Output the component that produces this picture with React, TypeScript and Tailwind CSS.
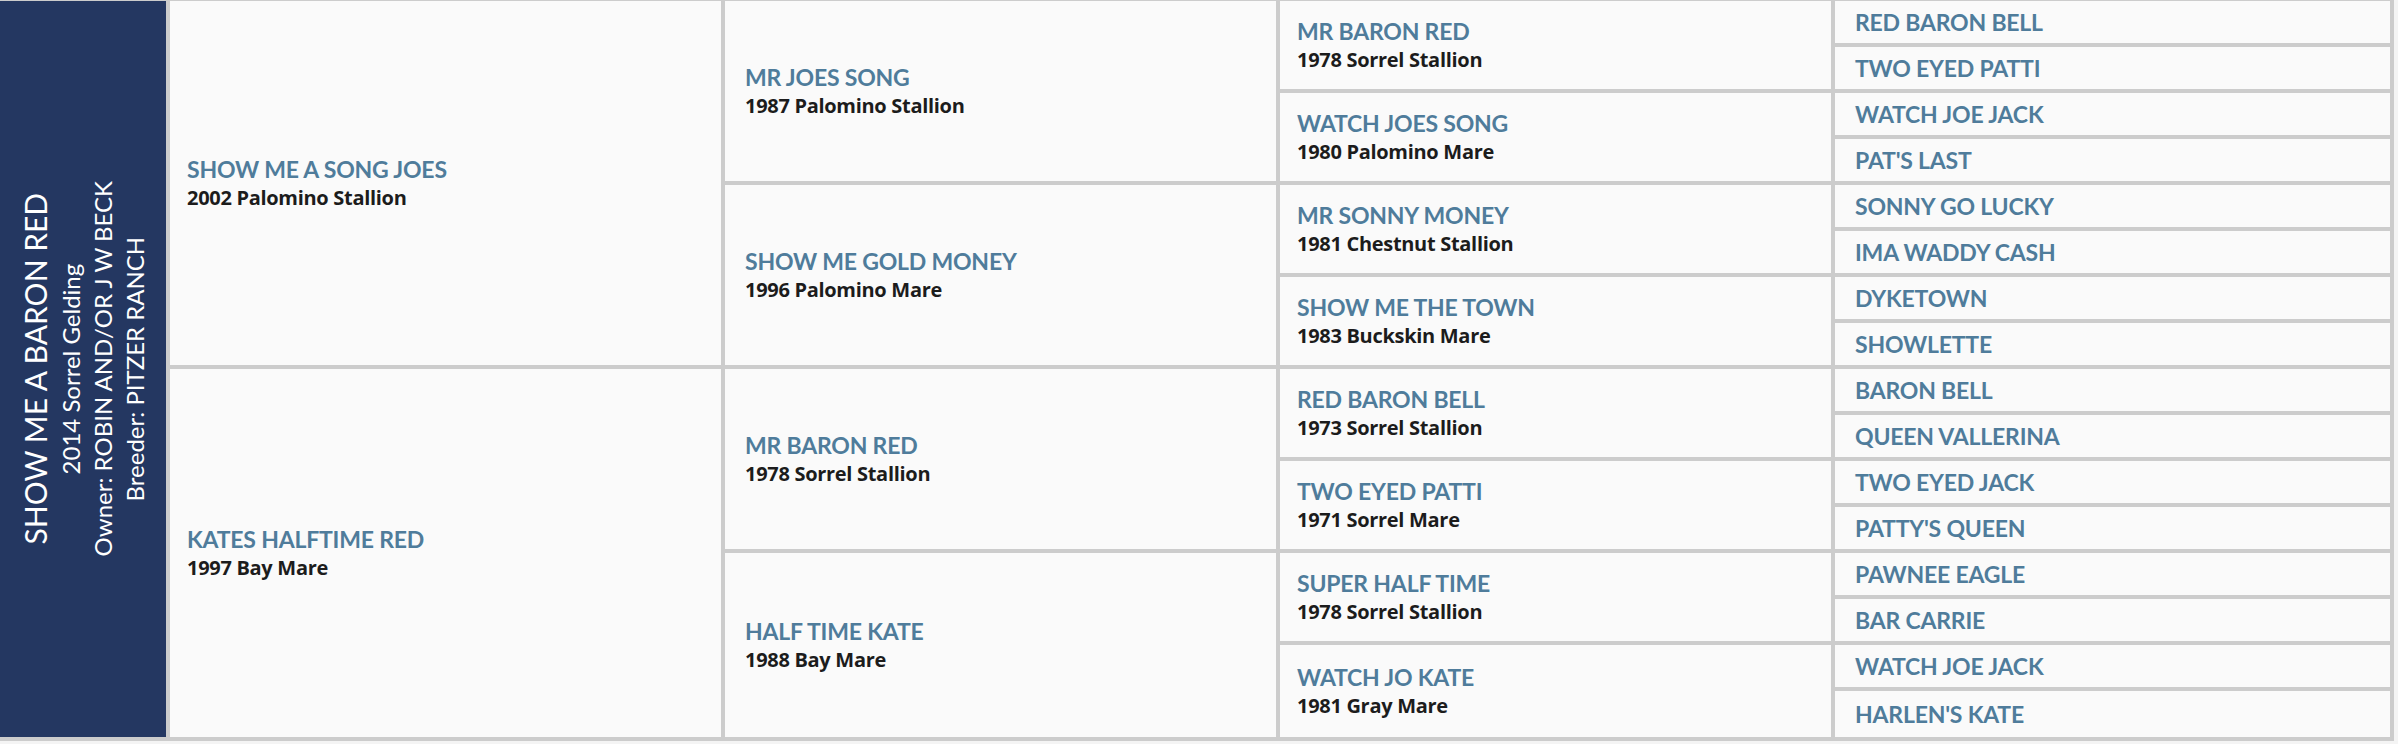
type Horse = { name: string; info?: string };

const sires: Horse[] = [
  { name: "SHOW ME A SONG JOES", info: "2002 Palomino Stallion" },
  { name: "KATES HALFTIME RED", info: "1997 Bay Mare" },
];

const grand: Horse[] = [
  { name: "MR JOES SONG", info: "1987 Palomino Stallion" },
  { name: "SHOW ME GOLD MONEY", info: "1996 Palomino Mare" },
  { name: "MR BARON RED", info: "1978 Sorrel Stallion" },
  { name: "HALF TIME KATE", info: "1988 Bay Mare" },
];

const great: Horse[] = [
  { name: "MR BARON RED", info: "1978 Sorrel Stallion" },
  { name: "WATCH JOES SONG", info: "1980 Palomino Mare" },
  { name: "MR SONNY MONEY", info: "1981 Chestnut Stallion" },
  { name: "SHOW ME THE TOWN", info: "1983 Buckskin Mare" },
  { name: "RED BARON BELL", info: "1973 Sorrel Stallion" },
  { name: "TWO EYED PATTI", info: "1971 Sorrel Mare" },
  { name: "SUPER HALF TIME", info: "1978 Sorrel Stallion" },
  { name: "WATCH JO KATE", info: "1981 Gray Mare" },
];

const greatGreat: string[] = [
  "RED BARON BELL",
  "TWO EYED PATTI",
  "WATCH JOE JACK",
  "PAT'S LAST",
  "SONNY GO LUCKY",
  "IMA WADDY CASH",
  "DYKETOWN",
  "SHOWLETTE",
  "BARON BELL",
  "QUEEN VALLERINA",
  "TWO EYED JACK",
  "PATTY'S QUEEN",
  "PAWNEE EAGLE",
  "BAR CARRIE",
  "WATCH JOE JACK",
  "HARLEN'S KATE",
];

const HorseCell = ({ horse, span, pad }: { horse: Horse; span: string; pad: string }) => (
  <div className={`${span} ${pad} flex flex-col justify-center bg-[#fafafa]`}>
    <div className="text-[23px] leading-[30px] font-bold tracking-[-0.2px] text-[#4f7c9b]">
      {horse.name}
    </div>
    <div className="font-['Open_Sans','Lato',sans-serif] text-[20px] leading-[28px] font-bold tracking-[-0.3px] text-[#1c1c1c]">
      {horse.info}
    </div>
  </div>
);

export default function App() {
  return (
    <div className="min-h-screen bg-[#f4f4f4] font-['Lato','Noto_Sans',sans-serif]">
      <div className="grid w-fit grid-flow-col grid-cols-[166px_551px_551px_551px_555px] grid-rows-[repeat(15,42px)_46px] gap-[4px] bg-[#cccccc] pt-px pr-[4px] pb-[4px]">
        {/* subject horse */}
        <div className="row-span-16 flex items-center justify-center bg-[#243761] text-white">
          <div className="rotate-180 text-center [writing-mode:vertical-rl]">
            <div className="text-[30px] leading-[40px]">SHOW ME A BARON RED</div>
            <div className="text-[24px] leading-[32px]">2014 Sorrel Gelding</div>
            <div className="text-[24px] leading-[32px]">Owner: ROBIN AND/OR J W BECK</div>
            <div className="text-[24px] leading-[32px]">Breeder: PITZER RANCH</div>
          </div>
        </div>

        {sires.map((h, i) => (
          <HorseCell key={"s" + i} horse={h} span="row-span-8" pad="pl-[17px]" />
        ))}
        {grand.map((h, i) => (
          <HorseCell key={"g" + i} horse={h} span="row-span-4" pad="pl-[20px]" />
        ))}
        {great.map((h, i) => (
          <HorseCell key={"gg" + i} horse={h} span="row-span-2" pad="pl-[17px]" />
        ))}
        {greatGreat.map((name, i) => (
          <div key={"ggg" + i} className="flex items-center bg-[#fafafa] pl-[20px]">
            <div className="text-[23px] font-bold tracking-[-0.2px] text-[#4f7c9b]">{name}</div>
          </div>
        ))}
      </div>
    </div>
  );
}
